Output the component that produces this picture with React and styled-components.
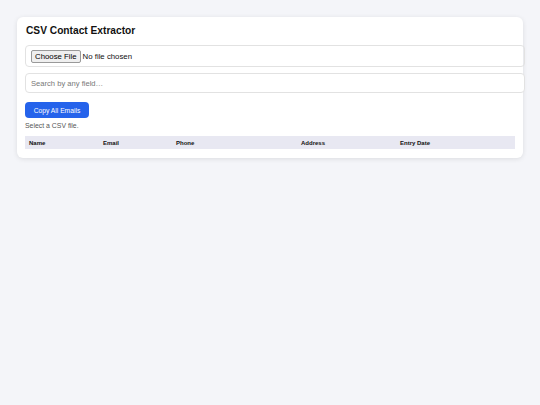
import React, { useState } from 'react';
import styled, { createGlobalStyle } from "styled-components";

const GlobalStyle = createGlobalStyle`
    html, body {
        margin: 0;
        padding: 0;
        background: #f4f5f9;
        font-family: "Liberation Sans", Arial, sans-serif;
    }
`

const Page = styled.div`
    padding: 17px;
    min-height: 405px;
    box-sizing: border-box;
`

const Card = styled.div`
    width: 490px;
    background: #fff;
    border-radius: 6px;
    box-shadow: 0 1px 5px rgba(0, 0, 0, 0.1);
    padding: 8px 8px 9px 8px;
`

const Title = styled.h1`
    font-size: 10.2px;
    line-height: 12px;
    font-weight: bold;
    margin: 0 0 8px 1px;
    color: #111;
`

const FileBox = styled.div`
    box-sizing: border-box;
    width: 500px;
    height: 22px;
    padding: 0 5px;
    border: 1px solid #e2e2e2;
    border-radius: 4px;
    margin-bottom: 6px;
    display: flex;
    align-items: center;
`

const FileInput = styled.input`
    font-family: "Liberation Sans", Arial, sans-serif;
    font-size: 7.8px;
    color: #111;
    &::file-selector-button {
        font-size: 7.8px;
        font-family: "Liberation Sans", Arial, sans-serif;
        padding: 1px 3px;
        margin-right: 2px;
        border: 1px solid #999;
        border-radius: 2px;
        background: #efefef;
    }
`

const SearchInput = styled.input`
    display: block;
    box-sizing: border-box;
    width: 500px;
    height: 20px;
    padding: 0 5px;
    border: 1px solid #e2e2e2;
    border-radius: 4px;
    font-family: "Liberation Sans", Arial, sans-serif;
    font-size: 7.6px;
    margin-bottom: 9px;
    outline: none;
    &::placeholder {
        color: #777;
    }
`

const Button = styled.button`
    display: block;
    background: #2563eb;
    color: #fff;
    border: none;
    border-radius: 4px;
    font-family: "Liberation Sans", Arial, sans-serif;
    font-size: 6.7px;
    height: 16px;
    width: 64px;
    padding: 0;
    cursor: pointer;
`

const Status = styled.div`
    font-size: 6.9px;
    line-height: 9px;
    color: #555;
    margin: 3px 0 6px 0;
`

const Table = styled.table`
    width: 490px;
    table-layout: fixed;
    border-collapse: collapse;
    font-size: 6px;
`

const Th = styled.th`
    box-sizing: border-box;
    background: #e8e8f2;
    text-align: left;
    font-weight: bold;
    padding: 0 4px;
    height: 13px;
    width: ${props => props.w}px;
    color: #111;
`

const columns = [
    { name: "Name", w: 74 },
    { name: "Email", w: 73 },
    { name: "Phone", w: 125 },
    { name: "Address", w: 99 },
    { name: "Entry Date", w: 119 },
]

const App = () => {
    const [search, setSearch] = useState("");
    return (
        <Page>
            <GlobalStyle />
            <Card>
                <Title>CSV Contact Extractor</Title>
                <FileBox>
                    <FileInput type="file" accept=".csv" />
                </FileBox>
                <SearchInput placeholder="Search by any field…" value={search} onChange={(e) => setSearch(e.target.value)} />
                <Button>Copy All Emails</Button>
                <Status>Select a CSV file.</Status>
                <Table>
                    <thead>
                        <tr>
                            {columns.map((c) => <Th key={c.name} w={c.w}>{c.name}</Th>)}
                        </tr>
                    </thead>
                    <tbody></tbody>
                </Table>
            </Card>
        </Page>
    )
}

export default App
